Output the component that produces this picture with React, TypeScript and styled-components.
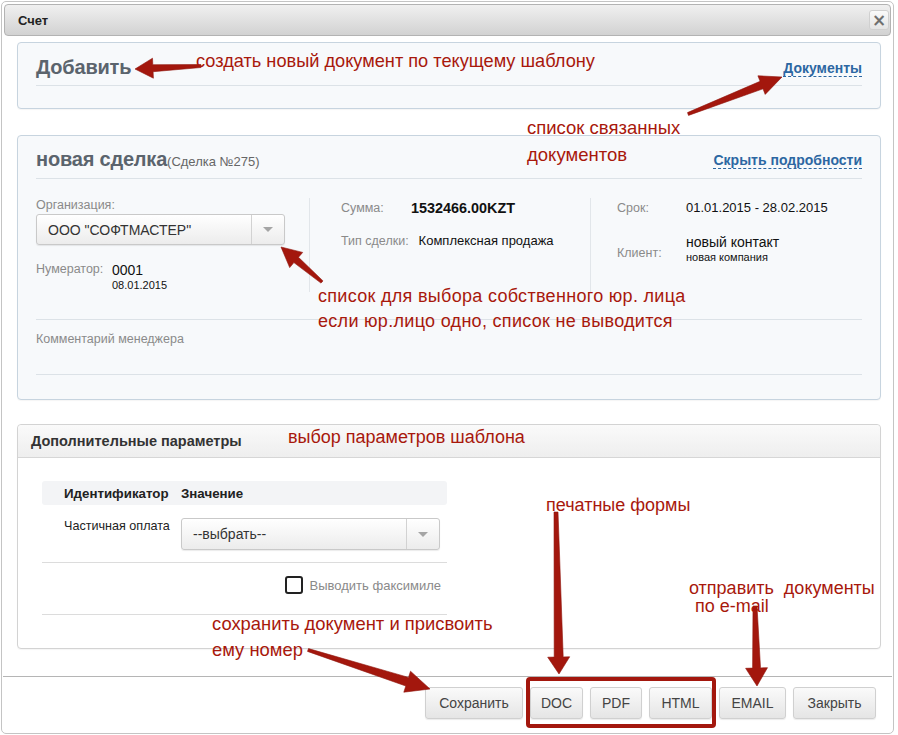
import React from "react";
import styled, { createGlobalStyle } from "styled-components";

const GlobalStyle = createGlobalStyle`
  html, body { margin: 0; padding: 0; background: #fff; }
  body { font-family: "Liberation Sans", Arial, sans-serif; color: #222; }
  * { box-sizing: border-box; }
`;

const Page = styled.div`
  position: relative;
  width: 898px;
  height: 735px;
  overflow: hidden;
  background: #fff;
`;

const Dialog = styled.div`
  margin: 1px 0 0 1px;
  width: 893px;
  height: 733px;
  border: 1px solid #c4c4c4;
  border-radius: 5px;
  display: flex;
  flex-direction: column;
  background: #fff;
`;

const TitleBar = styled.div`
  margin: 2px 2px 0;
  height: 32px;
  border: 1px solid #b3b3b3;
  border-radius: 4px;
  background: linear-gradient(#f0f0f0, #d2d2d2);
  display: flex;
  align-items: center;
  justify-content: space-between;
  padding: 0 1px 0 13px;
`;

const Title = styled.span`
  font-size: 13px;
  font-weight: bold;
  color: #222;
`;

const CloseButton = styled.div`
  width: 20px;
  height: 20px;
  border: 1px solid #d0d0d0;
  border-radius: 3px;
  background: linear-gradient(#fafafa, #e4e4e4);
  color: #6f6f6f;
  font-family: "DejaVu Sans", sans-serif;
  font-size: 17px;
  font-weight: bold;
  line-height: 18px;
  text-align: center;
`;

const Content = styled.div`
  padding: 6px 12px 0 15px;
  display: flex;
  flex-direction: column;
`;

const Panel = styled.div<{ $gap?: number; $plain?: boolean }>`
  margin-top: ${(p) => p.$gap ?? 0}px;
  border: 1px solid ${(p) => (p.$plain ? "#d3d3d3" : "#c7d4df")};
  border-radius: 4px;
  background: ${(p) => (p.$plain ? "#fff" : "#f7f9fb")};
  box-shadow: 0 1px 1px rgba(0, 0, 0, 0.04);
`;

const PanelInner = styled.div`
  padding: 0 18px;
`;

const PanelHeader = styled.div<{ $pt: number }>`
  height: 43px;
  padding-top: ${(p) => p.$pt}px;
  border-bottom: 1px solid #dce2e7;
  display: flex;
  align-items: center;
  justify-content: space-between;
`;

const BigTitle = styled.div`
  font-size: 20px;
  font-weight: bold;
  color: #5b646d;
  letter-spacing: -0.2px;
`;

const SubTitle = styled.span`
  font-size: 13px;
  font-weight: normal;
  color: #666;
  letter-spacing: 0;
`;

const DashLink = styled.span`
  font-size: 14px;
  font-weight: bold;
  color: #2c67a2;
  border-bottom: 1px dashed #2c67a2;
  line-height: 16px;
  margin-top: 2px;
`;

const Spacer = styled.div<{ $h: number; $w?: number }>`
  height: ${(p) => p.$h}px;
  width: ${(p) => p.$w ?? 0}px;
  flex-shrink: 0;
`;

const Details = styled.div`
  margin-top: 19px;
  display: grid;
  grid-template-columns: 273px 281px 1fr;
`;

const Column = styled.div<{ $pl?: number; $divider?: boolean }>`
  padding-left: ${(p) => p.$pl ?? 0}px;
  border-left: ${(p) => (p.$divider ? "1px solid #e2e6ea" : "none")};
  display: flex;
  flex-direction: column;
`;

const FieldLabel = styled.span<{ $w?: number; $mt?: number }>`
  font-size: 12.5px;
  color: #8a8a8a;
  line-height: 15px;
  min-width: ${(p) => p.$w ?? 0}px;
  margin-top: ${(p) => p.$mt ?? 0}px;
`;

const Select = styled.div<{ $w: number; $h: number }>`
  width: ${(p) => p.$w}px;
  height: ${(p) => p.$h}px;
  border: 1px solid #c9c9c9;
  border-radius: 3px;
  background: linear-gradient(#ffffff, #ececec);
  box-shadow: 0 1px 1px rgba(0, 0, 0, 0.08);
  display: flex;
  align-items: stretch;
`;

const SelectText = styled.div<{ $size: number }>`
  flex: 1;
  display: flex;
  align-items: center;
  padding-left: 11px;
  font-size: ${(p) => p.$size}px;
  color: #333;
`;

const SelectArrow = styled.div`
  width: 33px;
  border-left: 1px solid #d2d2d2;
  display: flex;
  align-items: center;
  justify-content: center;
  &::after {
    content: "";
    border-left: 5px solid transparent;
    border-right: 5px solid transparent;
    border-top: 5px solid #a5a5a5;
  }
`;

const InfoRow = styled.div<{ $mt?: number; $align?: string }>`
  display: flex;
  align-items: ${(p) => p.$align ?? "center"};
  margin-top: ${(p) => p.$mt ?? 0}px;
  line-height: 20px;
`;

const Value = styled.span<{ $size: number; $bold?: boolean }>`
  font-size: ${(p) => p.$size}px;
  font-weight: ${(p) => (p.$bold ? "bold" : "normal")};
  color: #111;
`;

const Stack = styled.div`
  display: flex;
  flex-direction: column;
`;

const MainValue = styled.span`
  font-size: 14px;
  line-height: 16px;
  color: #111;
`;

const SmallValue = styled.span<{ $size: number }>`
  font-size: ${(p) => p.$size}px;
  line-height: 14px;
  color: #111;
`;

const Rule = styled.div<{ $mt: number }>`
  margin-top: ${(p) => p.$mt}px;
  border-top: 1px solid #dce2e7;
`;

const Comment = styled.div`
  margin-top: 11px;
  font-size: 12.5px;
  line-height: 16px;
  color: #8a8a8a;
`;

const GrayHeader = styled.div`
  height: 33px;
  border-bottom: 1px solid #d6d6d6;
  border-radius: 4px 4px 0 0;
  background: linear-gradient(#fafafa, #eeeeee);
  padding-left: 13px;
  display: flex;
  align-items: center;
  font-size: 14.5px;
  font-weight: bold;
  color: #333;
`;

const ParamsBody = styled.div`
  padding: 23px 0 33px 24px;
`;

const ParamsTable = styled.div`
  width: 405px;
`;

const TableRow = styled.div<{ $head?: boolean }>`
  display: grid;
  grid-template-columns: 139px 1fr;
  background: ${(p) => (p.$head ? "#f3f4f6" : "transparent")};
  border-radius: ${(p) => (p.$head ? "3px" : "0")};
  border-bottom: ${(p) => (p.$head ? "none" : "1px solid #dcdcdc")};
  padding: ${(p) => (p.$head ? "0" : "13px 0 12px")};
  height: ${(p) => (p.$head ? "24px" : "auto")};
  align-items: ${(p) => (p.$head ? "center" : "start")};
`;

const HeadCell = styled.span<{ $pl?: number }>`
  padding-left: ${(p) => p.$pl ?? 0}px;
  font-size: 13.3px;
  font-weight: bold;
  color: #222;
`;

const RowLabel = styled.span`
  padding-left: 22px;
  font-size: 12.6px;
  line-height: 16px;
  color: #222;
`;

const CheckRow = styled.label`
  display: flex;
  justify-content: flex-end;
  align-items: center;
  gap: 7px;
  padding: 13px 6px 20px 0;
  border-bottom: 1px solid #dcdcdc;
  font-size: 13px;
  color: #8a8a8a;
`;

const CheckBox = styled.span`
  width: 18px;
  height: 18px;
  border: 2px solid #222;
  border-radius: 3px;
  background: #fff;
`;

const Footer = styled.div`
  margin: 27px 1px 0 1px;
  border-top: 1px solid #b5b5b5;
  padding: 10px 16px 0 0;
  display: flex;
  justify-content: flex-end;
  gap: 7px;
`;

const Button = styled.div<{ $w: number }>`
  width: ${(p) => p.$w}px;
  height: 32px;
  border: 1px solid #d0d0d0;
  border-radius: 3px;
  background: linear-gradient(#fafafa, #e5e5e5);
  box-shadow: 0 1px 1px rgba(0, 0, 0, 0.08);
  display: flex;
  align-items: center;
  justify-content: center;
  font-size: 14px;
  color: #444;
`;

const Overlay = styled.svg`
  position: absolute;
  left: 0;
  top: 0;
  pointer-events: none;
`;

const Note = styled.div<{ $x: number; $y: number; $size?: number; $ls?: number; $lh?: number }>`
  position: absolute;
  left: ${(p) => p.$x}px;
  top: ${(p) => p.$y - (p.$lh ?? 20) / 2}px;
  line-height: ${(p) => p.$lh ?? 20}px;
  white-space: pre;
  font-size: ${(p) => p.$size ?? 18}px;
  letter-spacing: ${(p) => p.$ls ?? 0}px;
  color: #a8180c;
`;

type Arrow = [number, number, number, number, number, number, number, number];

function arrowPoints([x1, y1, x2, y2, w1, w2, L, H]: Arrow): string {
  const dx = x2 - x1;
  const dy = y2 - y1;
  const len = Math.hypot(dx, dy);
  const ux = dx / len;
  const uy = dy / len;
  const nx = -uy;
  const ny = ux;
  const bx = x2 - ux * L;
  const by = y2 - uy * L;
  const pts = [
    [x1 + (nx * w1) / 2, y1 + (ny * w1) / 2],
    [bx + (nx * w2) / 2, by + (ny * w2) / 2],
    [bx + nx * H, by + ny * H],
    [x2, y2],
    [bx - nx * H, by - ny * H],
    [bx - (nx * w2) / 2, by - (ny * w2) / 2],
    [x1 - (nx * w1) / 2, y1 - (ny * w1) / 2],
  ];
  return pts.map((p) => `${p[0].toFixed(1)},${p[1].toFixed(1)}`).join(" ");
}

const arrows: Arrow[] = [
  [201, 66, 135, 69, 3, 7, 18, 10],
  [688, 114, 782, 77, 3, 8, 22, 10],
  [322, 282, 281, 247, 3, 7, 20, 10],
  [556, 512, 559, 674, 4, 9, 17, 11],
  [755, 606, 757, 686, 4, 8, 18, 11],
  [308, 650, 430, 689, 3, 9, 24, 11],
];

export default function App() {
  return (
    <Page>
      <GlobalStyle />
      <Dialog>
        <TitleBar>
          <Title>Счет</Title>
          <CloseButton>×</CloseButton>
        </TitleBar>
        <Content>
          <Panel>
            <PanelInner>
              <PanelHeader $pt={6}>
                <BigTitle>Добавить</BigTitle>
                <DashLink>Документы</DashLink>
              </PanelHeader>
              <Spacer $h={22} />
            </PanelInner>
          </Panel>

          <Panel $gap={26}>
            <PanelInner>
              <PanelHeader $pt={4}>
                <BigTitle>
                  новая сделка<SubTitle>(Сделка №275)</SubTitle>
                </BigTitle>
                <DashLink>Скрыть подробности</DashLink>
              </PanelHeader>
              <Details>
                <Column>
                  <FieldLabel>Организация:</FieldLabel>
                  <Spacer $h={1} />
                  <Select $w={249} $h={31}>
                    <SelectText $size={14}>ООО "СОФТМАСТЕР"</SelectText>
                    <SelectArrow />
                  </Select>
                  <InfoRow $mt={17} $align="flex-start">
                    <FieldLabel $w={76}>Нумератор:</FieldLabel>
                    <Stack>
                      <MainValue>0001</MainValue>
                      <SmallValue $size={11}>08.01.2015</SmallValue>
                    </Stack>
                  </InfoRow>
                </Column>
                <Column $pl={31} $divider>
                  <InfoRow>
                    <FieldLabel $w={60}>Сумма:</FieldLabel>
                    <Spacer $h={0} $w={10} />
                    <Value $size={14.4} $bold>
                      1532466.00KZT
                    </Value>
                  </InfoRow>
                  <InfoRow $mt={13}>
                    <FieldLabel $w={60}>Тип сделки:</FieldLabel>
                    <Spacer $h={0} $w={10} />
                    <Value $size={13}>Комплексная продажа</Value>
                  </InfoRow>
                </Column>
                <Column $pl={26} $divider>
                  <InfoRow>
                    <FieldLabel $w={69}>Срок:</FieldLabel>
                    <Value $size={13}>01.01.2015 - 28.02.2015</Value>
                  </InfoRow>
                  <InfoRow $mt={16} $align="flex-start">
                    <FieldLabel $w={69} $mt={12}>
                      Клиент:
                    </FieldLabel>
                    <Stack>
                      <MainValue>новый контакт</MainValue>
                      <SmallValue $size={11}>новая компания</SmallValue>
                    </Stack>
                  </InfoRow>
                </Column>
              </Details>
              <Rule $mt={27} />
              <Comment>Комментарий менеджера</Comment>
              <Rule $mt={27} />
              <Spacer $h={24} />
            </PanelInner>
          </Panel>

          <Panel $gap={24} $plain>
            <GrayHeader>Дополнительные параметры</GrayHeader>
            <ParamsBody>
              <ParamsTable>
                <TableRow $head>
                  <HeadCell $pl={22}>Идентификатор</HeadCell>
                  <HeadCell>Значение</HeadCell>
                </TableRow>
                <TableRow>
                  <RowLabel>Частичная оплата</RowLabel>
                  <Select $w={259} $h={32}>
                    <SelectText $size={14}>--выбрать--</SelectText>
                    <SelectArrow />
                  </Select>
                </TableRow>
                <CheckRow>
                  <CheckBox />
                  Выводить факсимиле
                </CheckRow>
              </ParamsTable>
            </ParamsBody>
          </Panel>
        </Content>
        <Footer>
          <Button $w={98}>Сохранить</Button>
          <Button $w={53}>DOC</Button>
          <Button $w={52}>PDF</Button>
          <Button $w={63}>HTML</Button>
          <Button $w={67}>EMAIL</Button>
          <Button $w={83}>Закрыть</Button>
        </Footer>
      </Dialog>

      <Overlay width={898} height={735} viewBox="0 0 898 735">
        {arrows.map((a, i) => (
          <polygon key={i} points={arrowPoints(a)} fill="#a3170d" stroke="#8e140b" strokeWidth={0.6} strokeLinejoin="round" />
        ))}
        <rect x={528} y={679} width={186} height={47} rx={2} fill="none" stroke="#a3170d" strokeWidth={4} />
      </Overlay>

      <Note $x={196} $y={61} $size={18.2}>создать новый документ по текущему шаблону</Note>
      <Note $x={527} $y={128} $size={18.5}>список связанных</Note>
      <Note $x={527} $y={155} $size={18.5}>документов</Note>
      <Note $x={318} $y={296} $ls={0.3}>список для выбора собственного юр. лица</Note>
      <Note $x={318} $y={321} $ls={0.3}>если юр.лицо одно, список не выводится</Note>
      <Note $x={288} $y={437}>выбор параметров шаблона</Note>
      <Note $x={546} $y={505}>печатные формы</Note>
      <Note $x={689} $y={588} $lh={16}>отправить  документы</Note>
      <Note $x={695} $y={606} $lh={16}>по e-mail</Note>
      <Note $x={212} $y={624} $size={18.4}>сохранить документ и присвоить</Note>
      <Note $x={212} $y={650} $size={18.4}>ему номер</Note>
    </Page>
  );
}
